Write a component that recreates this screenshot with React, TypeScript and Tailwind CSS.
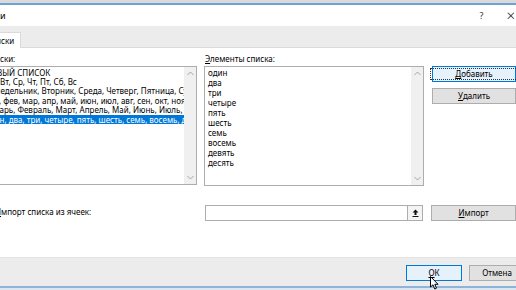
const leftItems = [
  "НОВЫЙ СПИСОК",
  "Пн, Вт, Ср, Чт, Пт, Сб, Вс",
  "Понедельник, Вторник, Среда, Четверг, Пятница, Суббота, Воскресенье",
  "янв, фев, мар, апр, май, июн, июл, авг, сен, окт, ноя, дек",
  "Январь, Февраль, Март, Апрель, Май, Июнь, Июль, Август",
  "один, два, три, четыре, пять, шесть, семь, восемь, девять, десять",
];

const rightItems = ["один", "два", "три", "четыре", "пять", "шесть", "семь", "восемь", "девять", "десять"];

function Chevron({ down = false }: { down?: boolean }) {
  return (
    <svg width="7" height="5" viewBox="0 0 7 5" className={down ? "rotate-180" : ""}>
      <path d="M0.5 4 L3.5 1 L6.5 4" fill="none" stroke="#a6a6a6" strokeWidth="1" />
    </svg>
  );
}

function ScrollBar() {
  return (
    <div className="flex w-[12px] shrink-0 flex-col items-center justify-between bg-[#f0f0f0] py-[4px]">
      <Chevron />
      <Chevron down />
    </div>
  );
}

function Btn({ children, primary = false, className = "" }: { children: React.ReactNode; primary?: boolean; className?: string }) {
  return (
    <div
      className={`flex h-[16px] items-center justify-center border ${
        primary ? "border-[#0078d7] bg-[#e5f1fb]" : "border-[#adadad] bg-[#e1e1e1]"
      } ${className}`}>
      {children}
    </div>
  );
}

export default function App() {
  return (
    <div className="relative h-[290px] w-[516px] overflow-hidden bg-white font-['Noto_Sans',sans-serif] text-[8px] leading-none text-black">
      <div className="-ml-[28px] flex w-[544px] flex-col">
        <div className="h-[3px] bg-[#dadada]" />
        <div className="h-[2px] bg-[#6fa3d8]" />

        {/* title bar */}
        <div className="flex h-[21px] items-center bg-white pl-[2px] pr-[1px]">
          <span className="text-[9px]">Списки</span>
          <span className="ml-auto text-[9px] text-[#333]">?</span>
          <span className="ml-[23px] text-[15px] font-light leading-none text-[#111]">×</span>
        </div>

        {/* tabs */}
        <div className="flex h-[22px] items-end border-b border-[#dadada] bg-[#ececec] pl-[7px]">
          <div className="-mb-px flex h-[16px] items-center border border-b-0 border-[#dadada] bg-white px-[6px]">
            Списки
          </div>
        </div>

        {/* body */}
        <div className="flex h-[209px] flex-col bg-white">
          <div className="flex pl-[10px] pt-[5px]">
            <div className="flex w-[215px] flex-col">
              <div className="h-[11px] pl-[3px] leading-[11px]">
                <u>С</u>писки:
              </div>
              <div className="mt-[2px] flex h-[119px] border border-[#adadad]">
                <div className="flex-1 overflow-hidden pt-[0.5px]">
                  {leftItems.map((t, i) => (
                    <div
                      key={i}
                      className={`whitespace-nowrap pl-[2px] leading-[9.4px] ${i === 5 ? "bg-[#0078d7] text-white" : ""}`}>
                      {t}
                    </div>
                  ))}
                </div>
                <ScrollBar />
              </div>
            </div>

            <div className="ml-[7px] flex w-[220px] flex-col">
              <div className="h-[11px] pl-[1px] leading-[11px]">
                <u>Э</u>лементы списка:
              </div>
              <div className="mt-[2px] flex h-[120px] border border-[#adadad]">
                <div className="flex-1 pl-[3px] pt-[1px]">
                  {rightItems.map((t) => (
                    <div key={t} className="leading-[10px]">
                      {t}
                    </div>
                  ))}
                </div>
                <ScrollBar />
              </div>
            </div>

            <div className="ml-[8px] flex w-[84px] flex-col gap-[6px] pt-[13px]">
              <Btn primary>
                <span className="border border-dotted border-[#333] px-[24px] leading-[10px]">
                  <u>Д</u>обавить
                </span>
              </Btn>
              <Btn>
                <u>У</u>далить
              </Btn>
            </div>
          </div>

          {/* import row */}
          <div className="mt-[19px] flex h-[16px] items-center">
            <div className="w-[205px] pl-[23px] pb-[3px]">
              <u>И</u>мпорт списка из ячеек:
            </div>
            <div className="ml-[28px] flex h-[16px] w-[219px] border border-[#adadad]">
              <div className="flex-1" />
              <div className="flex w-[15px] items-center justify-center border-l border-[#adadad] bg-[#f4f4f4]">
                <svg width="7" height="8" viewBox="0 0 7 8">
                  <path d="M3.5 0.5 L6.5 3.5 L4.5 3.5 L4.5 6 L2.5 6 L2.5 3.5 L0.5 3.5 Z" fill="#111" />
                  <rect x="0.5" y="7" width="6" height="1" fill="#111" />
                </svg>
              </div>
            </div>
            <Btn className="ml-[8px] w-[85px]">
              <u>И</u>мпорт
            </Btn>
          </div>
        </div>

        {/* footer */}
        <div className="flex h-[29px] items-center border-t border-[#e3e3e3] bg-[#ececec] pl-[434px] pt-[1px]">
          <Btn primary className="w-[56px] shrink-0">
            <u>О</u>К
          </Btn>
          <Btn className="ml-[7px] w-[56px] shrink-0">Отмена</Btn>
        </div>
        <div className="h-[2px] bg-[#8fb4da]" />
        <div className="h-[2px] bg-[#dce6f0]" />
      </div>

      {/* mouse pointer */}
      <svg width="9" height="14" viewBox="0 0 9 14" className="absolute left-[430px] top-[276px]">
        <path d="M0.5 0.5 L0.5 11 L3 8.8 L4.8 13 L6.5 12.2 L4.8 8.3 L8 8.3 Z" fill="#fff" stroke="#000" strokeWidth="1" strokeLinejoin="round" />
      </svg>
    </div>
  );
}
